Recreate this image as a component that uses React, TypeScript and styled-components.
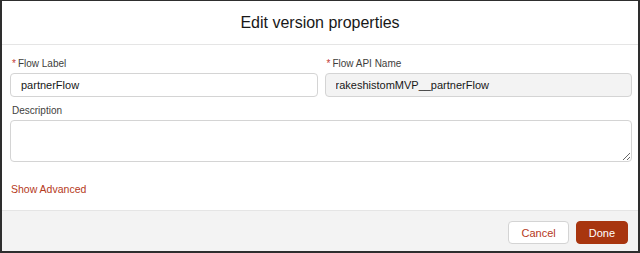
import React, { useState } from 'react';
import styled, { createGlobalStyle } from 'styled-components';

const GlobalStyle = createGlobalStyle`
  html, body {
    margin: 0;
    padding: 0;
    background: #ffffff;
  }
  * {
    box-sizing: border-box;
  }
`;

const Frame = styled.div`
  width: 640px;
  height: 253px;
  display: flex;
  flex-direction: column;
  background: #ffffff;
  border-style: solid;
  border-color: #2e2e2e;
  border-width: 1px 2px 2px 2px;
  font-family: "Liberation Sans", Arial, sans-serif;
  color: #181818;
`;

const Header = styled.div`
  height: 44px;
  display: flex;
  align-items: center;
  justify-content: center;
  border-bottom: 1px solid #e5e5e5;
`;

const Title = styled.h2`
  margin: 0;
  font-size: 16px;
  font-weight: 400;
  color: #181818;
`;

const Body = styled.div`
  flex: 1;
  padding: 12px 6px 0 8px;
`;

const Row = styled.div`
  display: grid;
  grid-template-columns: 1fr 1fr;
  column-gap: 7px;
  margin-bottom: 7px;
`;

const Field = styled.div`
  display: flex;
  flex-direction: column;
`;

const Label = styled.label`
  font-size: 10px;
  line-height: 14px;
  color: #3e3e3c;
  margin: 0 0 2px 2px;
`;

const Required = styled.abbr`
  color: #c23934;
  text-decoration: none;
  margin-right: 2px;
`;

const Input = styled.input<{ $readOnly?: boolean }>`
  height: 24px;
  width: 100%;
  padding: 0 10px;
  border: 1px solid #d4d4d4;
  border-radius: 4px;
  font-family: inherit;
  font-size: 11px;
  color: #181818;
  background: ${({ $readOnly }) => ($readOnly ? '#f3f3f3' : '#ffffff')};
  outline: none;
`;

const TextArea = styled.textarea`
  display: block;
  width: 100%;
  height: 42px;
  padding: 4px 10px;
  border: 1px solid #d4d4d4;
  border-radius: 4px;
  font-family: inherit;
  font-size: 11px;
  resize: vertical;
  outline: none;
`;

const AdvancedLink = styled.a`
  display: inline-block;
  margin: 20px 0 0 1px;
  font-size: 10.5px;
  line-height: 14px;
  color: #b5391b;
  text-decoration: none;
  cursor: pointer;
`;

const Footer = styled.div`
  height: 41px;
  display: flex;
  justify-content: flex-end;
  align-items: flex-start;
  gap: 7px;
  padding: 10px 10px 0 0;
  background: #f3f3f3;
  border-top: 1px solid #e5e5e5;
`;

const Button = styled.button<{ $variant?: 'brand' | 'neutral' }>`
  height: 23px;
  padding: 0 12px;
  border-radius: 4px;
  font-family: inherit;
  font-size: 11px;
  cursor: pointer;
  ${({ $variant }) =>
    $variant === 'brand'
      ? `
        background: #a8350f;
        border: 1px solid #a8350f;
        color: #ffffff;
      `
      : `
        background: #ffffff;
        border: 1px solid #d4d4d4;
        color: #b5391b;
      `}
`;

const App: React.FC = () => {
  const [label, setLabel] = useState('partnerFlow');
  const [description, setDescription] = useState('');

  return (
    <>
      <GlobalStyle />
      <Frame>
        <Header>
          <Title>Edit version properties</Title>
        </Header>
        <Body>
          <Row>
            <Field>
              <Label htmlFor="flowLabel">
                <Required title="required">*</Required>Flow Label
              </Label>
              <Input id="flowLabel" value={label} onChange={(e) => setLabel(e.target.value)} />
            </Field>
            <Field>
              <Label htmlFor="apiName">
                <Required title="required">*</Required>Flow API Name
              </Label>
              <Input id="apiName" $readOnly readOnly value="rakeshistomMVP__partnerFlow" />
            </Field>
          </Row>
          <Field>
            <Label htmlFor="description">Description</Label>
            <TextArea
              id="description"
              value={description}
              onChange={(e) => setDescription(e.target.value)}
            />
          </Field>
          <AdvancedLink>Show Advanced</AdvancedLink>
        </Body>
        <Footer>
          <Button $variant="neutral">Cancel</Button>
          <Button $variant="brand">Done</Button>
        </Footer>
      </Frame>
    </>
  );
};

export default App;
